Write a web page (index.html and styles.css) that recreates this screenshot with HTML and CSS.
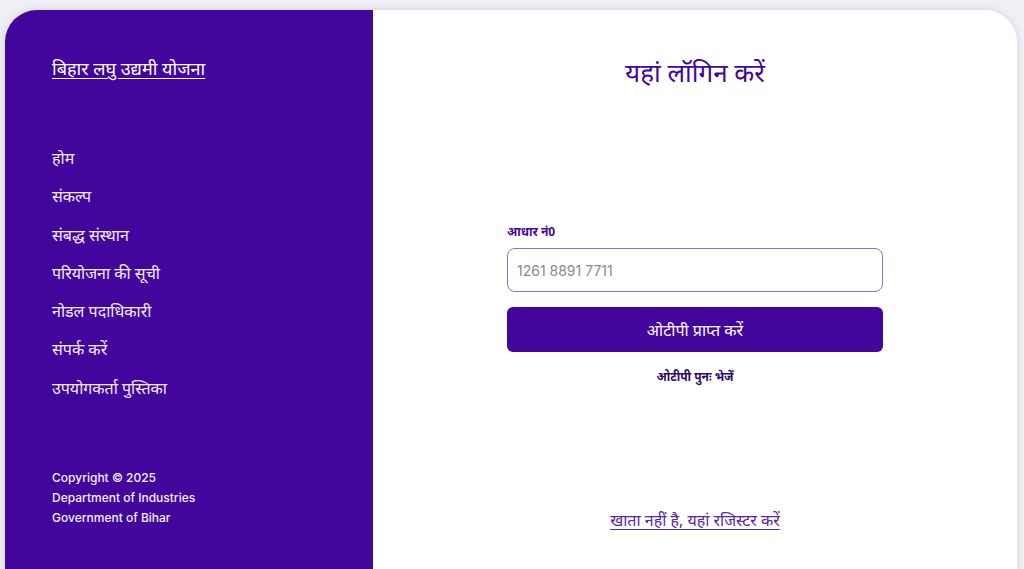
FILE: index.html
```html
<!DOCTYPE html>
<html lang="hi">
<head>
<meta charset="UTF-8" />
<meta name="viewport" content="width=device-width, initial-scale=1.0" />
<title>बिहार लघु उद्यमी योजना - लॉगिन</title>
<link rel="stylesheet" href="styles.css">
</head>
<body>

<div class="card">
  <aside class="sidebar">
    <a class="brand" href="#">बिहार लघु उद्यमी योजना</a>

    <nav class="menu">
      <a href="#">होम</a>
      <a href="#">संकल्प</a>
      <a href="#">संबद्ध संस्थान</a>
      <a href="#">परियोजना की सूची</a>
      <a href="#">नोडल पदाधिकारी</a>
      <a href="#">संपर्क करें</a>
      <a href="#">उपयोगकर्ता पुस्तिका</a>
    </nav>

    <div class="copy">
      <p>Copyright © 2025</p>
      <p>Department of Industries</p>
      <p>Government of Bihar</p>
    </div>
  </aside>

  <main class="login">
    <h1>यहां लॉगिन करें</h1>

    <form class="login-form" onsubmit="return false;">
      <label for="aadhar">आधार नं0</label>
      <input type="text" id="aadhar" placeholder="1261 8891 7711" />
      <button type="submit" class="otp-button">ओटीपी प्राप्त करें</button>
      <a class="resend" href="#">ओटीपी पुनः भेजें</a>
    </form>

    <a class="register" href="#">खाता नहीं है, यहां रजिस्टर करें</a>
  </main>
</div>

</body>
</html>
```

FILE: styles.css
```css
:root {
  --purple: #43069d;
  --purple-light: #8d6fd3;
  --page-bg: #eef0f5;
}

body {
  margin: 0;
  background-color: var(--page-bg);
  font-family: "Noto Sans", "Inter", sans-serif;
  overflow: hidden;
}

.card {
  display: flex;
  margin: 10px 7px 0 5px;
  height: 600px;
  border-radius: 32px;
  overflow: hidden;
  background-color: #fff;
  box-shadow: 0 0 8px rgba(0, 0, 0, 0.12);
}

.sidebar {
  width: 368px;
  flex-shrink: 0;
  box-sizing: border-box;
  padding: 46px 0 0 47px;
  background-color: var(--purple);
  color: #fff;
  display: flex;
  flex-direction: column;
}

.brand {
  color: #fff;
  font-size: 18px;
  line-height: 24px;
  text-decoration: underline;
  text-underline-offset: 3px;
  align-self: flex-start;
}

.menu {
  display: flex;
  flex-direction: column;
  gap: 14px;
  margin-top: 66px;
}

.menu a {
  color: #f1ecfb;
  text-decoration: none;
  font-size: 16px;
  line-height: 24.3px;
}

.copy {
  margin-top: 68px;
  font-family: "Inter", sans-serif;
  font-size: 12px;
  font-weight: 500;
  line-height: 20px;
  color: #f4f0fc;
}

.copy p {
  margin: 0;
}

.login {
  flex: 1;
  display: flex;
  flex-direction: column;
  align-items: center;
  padding-top: 44px;
}

.login h1 {
  margin: 0;
  color: var(--purple);
  font-size: 26px;
  font-weight: 400;
  line-height: 36px;
}

.login-form {
  width: 376px;
  display: flex;
  flex-direction: column;
  margin-top: 134px;
}

.login-form label {
  color: var(--purple);
  font-size: 12px;
  font-weight: 700;
  line-height: 16px;
}

.login-form input {
  margin-top: 8px;
  height: 44px;
  box-sizing: border-box;
  padding: 0 9px;
  border: 1px solid var(--purple-light);
  border-radius: 8px;
  font-family: "Inter", sans-serif;
  font-size: 14px;
  color: #333;
}

.login-form input::placeholder {
  color: #8a8a8a;
}

.otp-button {
  margin-top: 15px;
  height: 45px;
  border: none;
  border-radius: 6px;
  background-color: var(--purple);
  color: #fff;
  font-family: "Noto Sans", sans-serif;
  font-size: 16px;
  cursor: pointer;
}

.resend {
  margin-top: 17px;
  text-align: center;
  color: #2d0a6e;
  font-size: 12px;
  font-weight: 700;
  line-height: 16px;
  text-decoration: none;
}

.register {
  margin-top: 123px;
  color: #5527ad;
  font-size: 16px;
  line-height: 24px;
  text-underline-offset: 3px;
}
```
